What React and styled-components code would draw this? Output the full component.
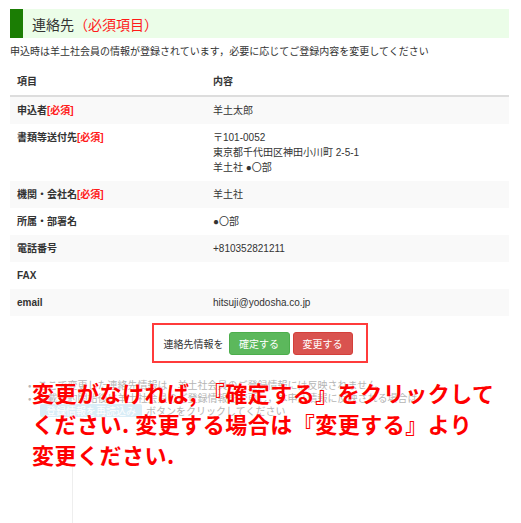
import styled, { createGlobalStyle } from "styled-components";

const GlobalStyle = createGlobalStyle`
  html, body {
    margin: 0;
    padding: 0;
    background: #fff;
  }
  body {
    font-family: "Liberation Sans", "Noto Sans CJK JP", sans-serif;
    color: #333;
  }
`;

const Page = styled.div`
  position: relative;
  width: 521px;
  height: 523px;
  overflow: hidden;
  padding: 9px 12px 0 10px;
  box-sizing: border-box;
`;

const SectionTitle = styled.h2`
  margin: 0;
  height: 29px;
  display: flex;
  align-items: center;
  background: #ebfde8;
  border-left: 13px solid #1b7d04;
  padding-left: 9px;
  font-size: 14px;
  font-weight: normal;
  color: #333;
`;

const Required = styled.span`
  color: #ff1a1a;
`;

const Lead = styled.p`
  margin: 7px 0 0;
  font-size: 10px;
  line-height: 14px;
  color: #333;
`;

const Table = styled.table`
  margin-top: 9px;
  width: 100%;
  border-collapse: collapse;
  font-size: 10px;
  line-height: 15px;
`;

const HeadCell = styled.th`
  text-align: left;
  font-weight: bold;
  padding: 6px 7px;
  border-bottom: 2px solid #ddd;
  width: ${(p) => (p.$first ? "182px" : "auto")};
`;

const Row = styled.tr`
  background: ${(p) => (p.$striped ? "#f9f9f9" : "#fff")};
  & + & td {
    border-top: 1px solid #ddd;
  }
`;

const Label = styled.td`
  font-weight: bold;
  padding: 6px 7px;
  vertical-align: top;
`;

const Value = styled.td`
  padding: 6px 7px;
  vertical-align: top;
`;

const Mark = styled.span`
  color: #ff1a1a;
`;

const ConfirmBox = styled.div`
  margin: 7px auto 0;
  width: 216px;
  height: 40px;
  box-sizing: border-box;
  border: 2px solid #ff3b3b;
  display: flex;
  align-items: center;
  padding-left: 10px;
  gap: 3px;
  font-size: 10px;
`;

const BoxLabel = styled.span`
  margin-right: 2px;
  font-family: "Noto Sans CJK JP", sans-serif;
`;

const Button = styled.button`
  height: 23px;
  width: ${(p) => p.$w}px;
  border-radius: 3px;
  border: 1px solid ${(p) => (p.$kind === "ok" ? "#4cae4c" : "#d43f3a")};
  background: ${(p) => (p.$kind === "ok" ? "#5cb85c" : "#d9534f")};
  color: #fff;
  font-size: 10px;
  font-family: "Noto Sans CJK JP", sans-serif;
  padding: 0;
`;

const Notes = styled.ul`
  margin: 15px 0 0;
  padding: 0 0 0 18px;
  list-style: none;
  font-size: 10px;
  line-height: 13px;
  color: #b5b5b5;
  font-family: "Noto Sans CJK JP", sans-serif;
`;

const Note = styled.li`
  &::before {
    content: "•";
    margin-right: 6px;
  }
`;

const Badge = styled.span`
  display: inline-block;
  margin-left: 12px;
  padding: 0 6px;
  background: #d9edf7;
  color: #fff;
  border-radius: 2px;
  margin-right: 4px;
`;

const Divider = styled.div`
  margin: 47px 0 0 62px;
  height: 70px;
  border-left: 1px solid #eee;
`;

const Annotation = styled.p`
  position: absolute;
  left: 32px;
  top: 377px;
  margin: 0;
  white-space: nowrap;
  font-size: 22px;
  line-height: 31px;
  font-weight: bold;
  letter-spacing: 0.5px;
  color: #ff0000;
  font-family: "Noto Sans CJK JP", sans-serif;
  text-shadow: 0 0 2px #fff;
`;

const rows = [
  { label: "申込者", req: true, value: ["羊土太郎"] },
  {
    label: "書類等送付先",
    req: true,
    value: ["〒101-0052", "東京都千代田区神田小川町 2-5-1", "羊土社 ●〇部"],
  },
  { label: "機関・会社名", req: true, value: ["羊土社"] },
  { label: "所属・部署名", value: ["●〇部"] },
  { label: "電話番号", value: ["+810352821211"] },
  { label: "FAX", value: [""] },
  { label: "email", value: ["hitsuji@yodosha.co.jp"] },
];

export default function App() {
  return (
    <>
      <GlobalStyle />
      <Page>
        <SectionTitle>
          連絡先<Required>（必須項目）</Required>
        </SectionTitle>
        <Lead>
          申込時は羊土社会員の情報が登録されています，必要に応じてご登録内容を変更してください
        </Lead>
        <Table>
          <thead>
            <tr>
              <HeadCell $first>項目</HeadCell>
              <HeadCell>内容</HeadCell>
            </tr>
          </thead>
          <tbody>
            {rows.map((r, i) => (
              <Row key={r.label} $striped={i % 2 === 0}>
                <Label>
                  {r.label}
                  {r.req && <Mark>[必須]</Mark>}
                </Label>
                <Value>
                  {r.value.map((line, j) => (
                    <div key={j}>{line || "\u00a0"}</div>
                  ))}
                </Value>
              </Row>
            ))}
          </tbody>
        </Table>
        <ConfirmBox>
          <BoxLabel>連絡先情報を</BoxLabel>
          <Button $kind="ok" $w={61}>確定する</Button>
          <Button $kind="ng" $w={60}>変更する</Button>
        </ConfirmBox>
        <Notes>
          <Note>ここで変更した連絡先情報は，羊土社会員のご登録情報には反映されません</Note>
          <Note>掲載予約開始後に羊土社会員のご登録情報を変更し，本申込情報に反映される場合は</Note>
          <li>
            <Badge>登録情報を再読込み</Badge>ボタンをクリックしてください
          </li>
        </Notes>
        <Divider />
        <Annotation>
          変更がなければ, 『確定する』をクリックして
          <br />
          ください. 変更する場合は『変更する』より
          <br />
          変更ください.
        </Annotation>
      </Page>
    </>
  );
}
